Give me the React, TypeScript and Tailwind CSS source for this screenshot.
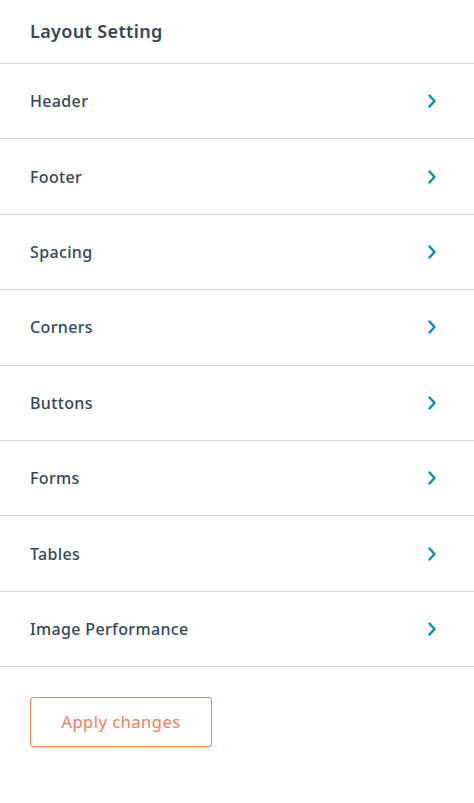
import React from 'react';

const items = ['Header', 'Footer', 'Spacing', 'Corners', 'Buttons', 'Forms', 'Tables', 'Image Performance'];

function Chevron() {
  return (
    <svg width="8" height="14" viewBox="0 0 8 14" fill="none">
      <path d="M1.5 1.5L6.5 7L1.5 12.5" stroke="#0091ae" strokeWidth="2.4" strokeLinecap="round" strokeLinejoin="round" />
    </svg>
  );
}

export default function App() {
  return (
    <div className="w-[474px] min-h-[803px] bg-white text-[#33475b]" style={{ fontFamily: '"Noto Sans", sans-serif' }}>
      <div className="h-[64px] flex items-center px-[30px] pb-px border-b border-[#cbd6e2]">
        <h1 className="text-[18px] font-semibold tracking-[0.35px]">Layout Setting</h1>
      </div>
      {items.map((item) => (
        <div key={item} className="h-[75.4px] flex items-center justify-between pl-[30px] pr-[38px] border-b border-[#cbd6e2]">
          <span className="text-[16px] font-medium tracking-[0.35px]">{item}</span>
          <Chevron />
        </div>
      ))}
      <div className="px-[30px] pt-[30px]">
        <button className="w-[182px] h-[50px] border border-[#ff7a59] rounded-[3px] text-[#ff7a59] text-[16.5px] tracking-[0.5px]">
          Apply changes
        </button>
      </div>
    </div>
  );
}
